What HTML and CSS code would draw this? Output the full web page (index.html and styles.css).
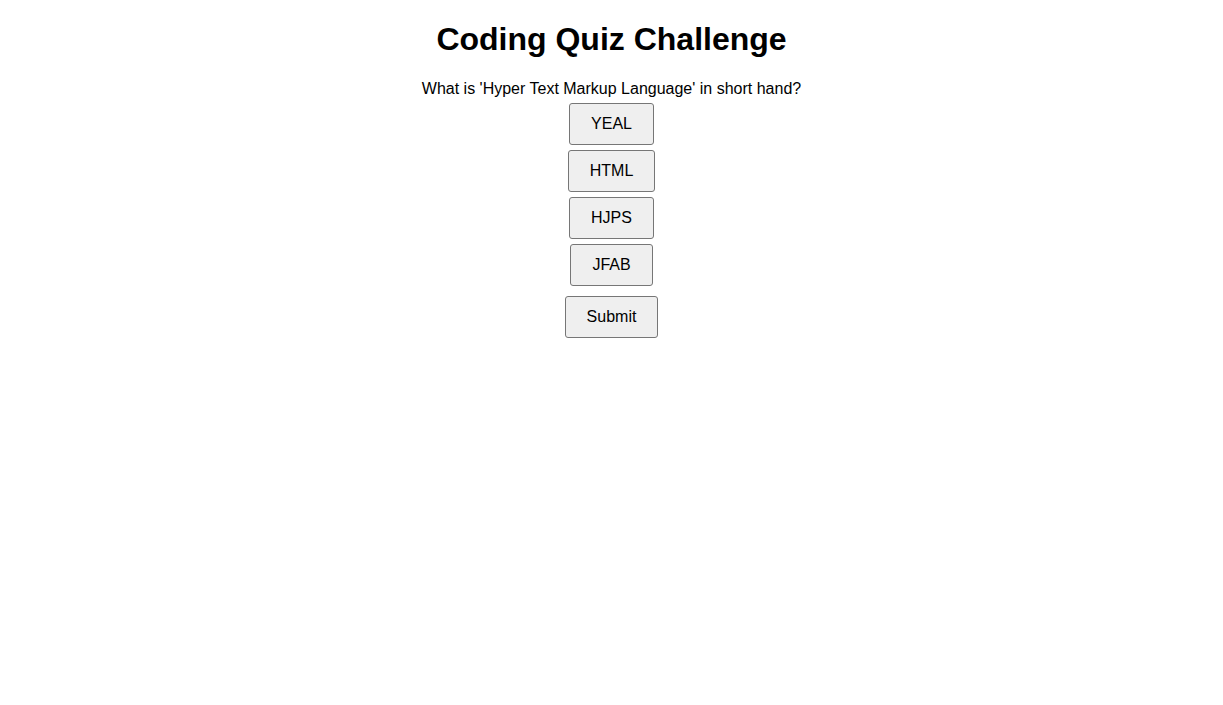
FILE: index.html
```html
<!DOCTYPE html>
<html lang="en">
<head>
    <meta charset="UTF-8">
    <meta name="viewport" content="width=device-width, initial-scale=1.0">
    <title>Coding Quiz Challenge</title>
    <link rel="stylesheet" href="styles.css">
</head>
<body>
    <h1>Coding Quiz Challenge</h1>
    <div id="quiz">
        <p class="question">What is 'Hyper Text Markup Language' in short hand?</p>
        <div class="choices">
            <button class="choice">YEAL</button>
            <button class="choice">HTML</button>
            <button class="choice">HJPS</button>
            <button class="choice">JFAB</button>
        </div>
        <button class="submit-btn">Submit</button>
    </div>
</body>
</html>
```

FILE: styles.css
```css
/* General Styles */
body {
    font-family: "Liberation Sans", Arial, sans-serif;
    text-align: center;
    color: #000;
    background: #fff;
    margin: 0;
    padding: 0 8px;
}

h1 {
    font-size: 32px;
    margin: 21px 0 22px;
}

.question {
    font-size: 16px;
    margin: 0;
}

/* Buttons */
button {
    display: block;
    margin: 5px auto;
    padding: 11px 21px;
    font-family: "Liberation Sans", Arial, sans-serif;
    font-size: 16px;
    color: #000;
    background-color: #efefef;
    border: 1px solid #767676;
    border-radius: 3px;
}

.submit-btn {
    margin-top: 10px;
}
```
